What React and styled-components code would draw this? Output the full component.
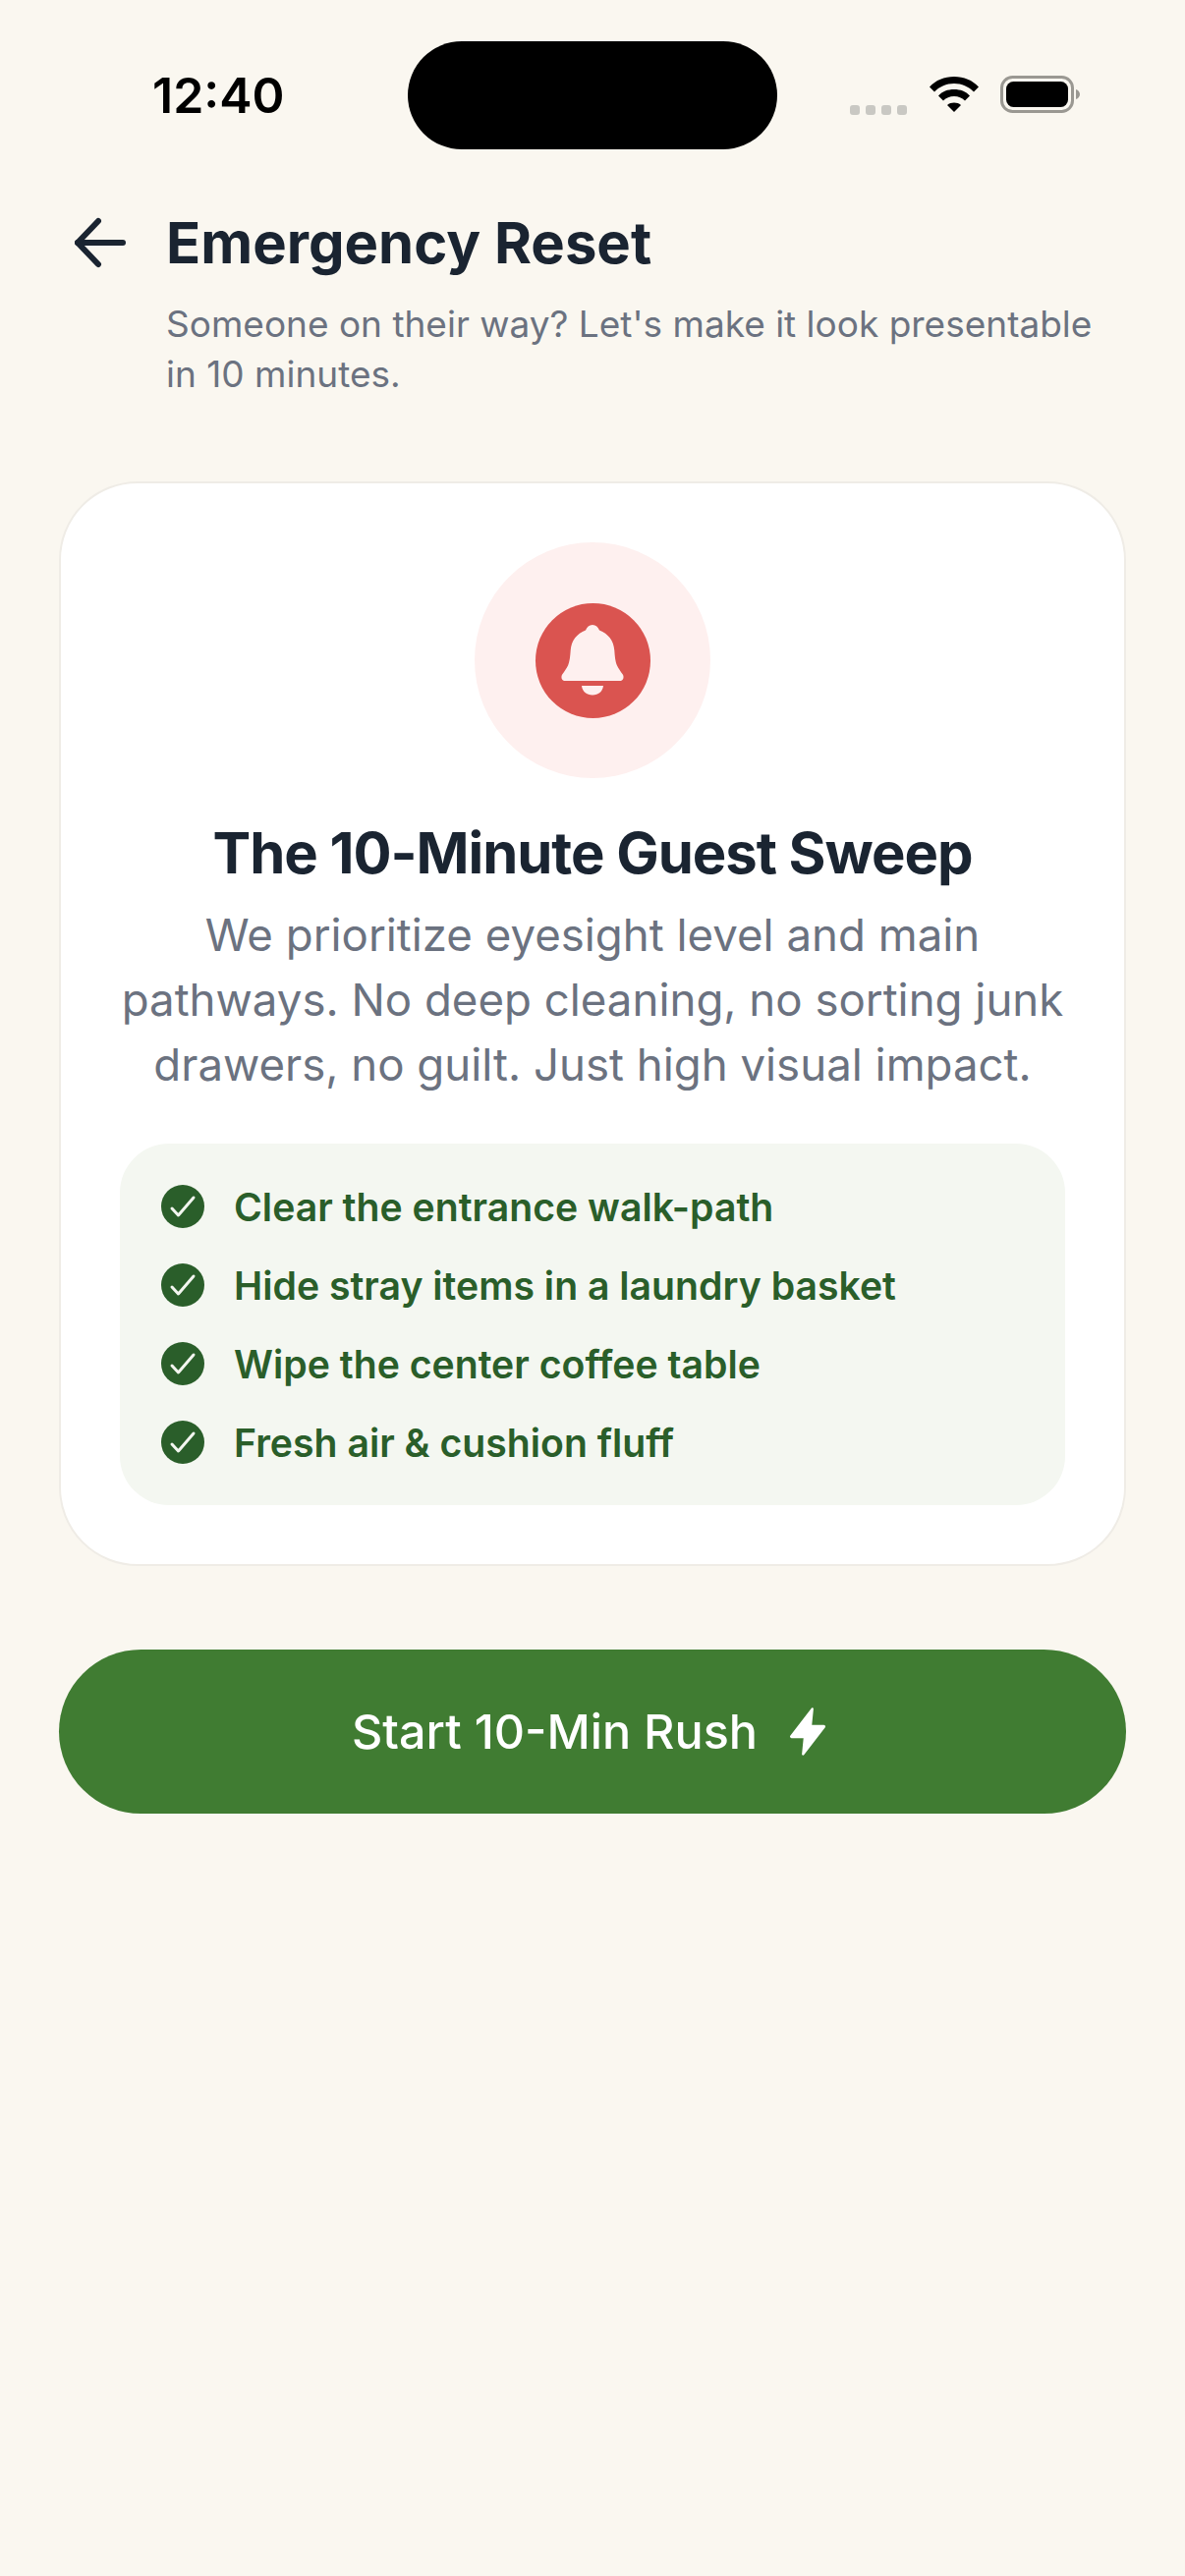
import React from "react";
import styled, { createGlobalStyle } from "styled-components";

const GlobalStyle = createGlobalStyle`
	html, body {
		margin: 0;
		padding: 0;
		background: #faf7f0;
	}
	body {
		font-family: "Inter", "Liberation Sans", sans-serif;
	}
`;

const items = [
	"Clear the entrance walk-path",
	"Hide stray items in a laundry basket",
	"Wipe the center coffee table",
	"Fresh air & cushion fluff",
];

const Screen = styled.div`
	width: 1206px;
	min-height: 2622px;
	background: #faf7f0;
	display: flex;
	flex-direction: column;
`;

const StatusBar = styled.div`
	height: 152px;
	padding-top: 42px;
	box-sizing: border-box;
	display: grid;
	grid-template-columns: 415px 376px 1fr;
`;

const Time = styled.div`
	font-size: 50px;
	font-weight: 600;
	color: #000;
	padding-left: 155px;
	line-height: 110px;
`;

const Island = styled.div`
	height: 110px;
	background: #000;
	border-radius: 55px;
`;

const StatusIcons = styled.div`
	display: flex;
	align-items: center;
	height: 110px;
	padding-left: 74px;
`;

const Dots = styled.div`
	display: flex;
	gap: 6px;
	margin-top: 30px;
	margin-right: 23px;
`;

const Dot = styled.span`
	width: 10px;
	height: 10px;
	border-radius: 3px;
	background: #c9c8c3;
`;

const Wifi = styled.svg`
	width: 50px;
	height: 37px;
	margin-right: 22px;
	margin-top: -3px;
`;

const Battery = styled.svg`
	width: 82px;
	height: 38px;
	margin-top: -3px;
`;

const Header = styled.header`
	display: grid;
	grid-template-columns: 93px 1fr;
	padding: 57px 60px 0 76px;
`;

const BackIcon = styled.svg`
	width: 52px;
	height: 52px;
	margin-top: 12px;
`;

const Title = styled.h1`
	margin: 0;
	font-size: 58px;
	line-height: 76px;
	font-weight: 700;
	color: #1a2431;
`;

const Subtitle = styled.p`
	grid-column: 2;
	margin: 19px 0 0;
	font-size: 37px;
	line-height: 51px;
	font-weight: 400;
	color: #6b7280;
`;

const Card = styled.section`
	margin: 84px 60px 0;
	padding: 60px;
	box-sizing: border-box;
	height: 1104px;
	background: #fff;
	border: 2px solid #efece6;
	border-radius: 80px;
	display: flex;
	flex-direction: column;
	align-items: center;
`;

const Halo = styled.div`
	width: 240px;
	height: 240px;
	flex: none;
	border-radius: 50%;
	background: #fef0ef;
	display: flex;
	align-items: center;
	justify-content: center;
`;

const BellBadge = styled.div`
	width: 117px;
	height: 117px;
	border-radius: 50%;
	background: #da5450;
	display: flex;
	align-items: center;
	justify-content: center;
`;

const BellIcon = styled.svg`
	width: 66px;
	height: 74px;
`;

const CardTitle = styled.h2`
	margin: 40px 0 0;
	font-size: 58px;
	line-height: 72px;
	font-weight: 700;
	letter-spacing: -1.05px;
	color: #1a2431;
`;

const Description = styled.p`
	margin: 15px 0 0;
	font-size: 45.6px;
	line-height: 66px;
	font-weight: 400;
	text-align: center;
	white-space: nowrap;
	color: #6b7280;
`;

const Checklist = styled.ul`
	list-style: none;
	margin: 47px 0 0;
	padding: 42px;
	box-sizing: border-box;
	align-self: stretch;
	background: #f4f7f1;
	border-radius: 50px;
	display: flex;
	flex-direction: column;
	gap: 36px;
`;

const CheckItem = styled.li`
	display: flex;
	align-items: center;
	gap: 30px;
	height: 44px;
	font-size: 39.2px;
	font-weight: 600;
	color: #2a5e2a;
`;

const CheckIcon = styled.svg`
	width: 44px;
	height: 44px;
	flex: none;
`;

const RushButton = styled.button`
	margin: 85px 60px 0;
	height: 167px;
	border: none;
	border-radius: 84px;
	background: #407c32;
	color: #fff;
	font-family: inherit;
	font-size: 48.5px;
	font-weight: 500;
	display: flex;
	align-items: center;
	justify-content: center;
	gap: 32px;
`;

const BoltIcon = styled.svg`
	width: 38px;
	height: 51px;
	margin-right: 7px;
`;

export default function App() {
	return (
		<Screen>
			<GlobalStyle />
			<StatusBar>
				<Time>12:40</Time>
				<Island />
				<StatusIcons>
					<Dots>
						<Dot />
						<Dot />
						<Dot />
						<Dot />
					</Dots>
					<Wifi viewBox="0 0 50 37">
						<path d="M0 11.5C6.5 4.5 15 1 25 1s18.500 3.500 25 10.500l-5 5C39.500 11 33 8 25 8S10.500 11 5 16.500z" fill="#000" />
						<path d="M9 20.500C13 16 18.500 14 25 14s12 2 16 6.500l-5 5C33 22.500 29.500 21 25 21s-8 1.500-11 4.500z" fill="#000" />
						<path d="M18 30c2-1.800 4.300-2.500 7-2.500s5 .7 7 2.500l-7 7z" fill="#000" />
					</Wifi>
					<Battery viewBox="0 0 82 38">
						<rect x="1.500" y="1.500" width="72" height="35" rx="11" fill="none" stroke="#9a9892" strokeWidth="3" />
						<rect x="6" y="6" width="63" height="26" rx="7.500" fill="#000" />
						<path d="M77 14c2.500.8 4 2.800 4 5s-1.500 4.200-4 5z" fill="#9a9892" />
					</Battery>
				</StatusIcons>
			</StatusBar>

			<Header>
				<BackIcon viewBox="0 0 52 52" fill="none" stroke="#1a2431" strokeWidth="6" strokeLinecap="round" strokeLinejoin="round">
					<path d="M49 26H3" />
					<path d="M24 4L3 26l21 22" />
				</BackIcon>
				<Title>Emergency Reset</Title>
				<Subtitle>
					Someone on their way? Let's make it look presentable
					<br />
					in 10 minutes.
				</Subtitle>
			</Header>

			<Card>
				<Halo>
					<BellBadge>
						<BellIcon viewBox="0 0 66 74" fill="#fef0ef">
							<path d="M33 1C36.400 1 38.600 3.200 40 6.500C49 10 54.600 17 55.300 27C55.800 34 56.300 38 57.800 42C59.300 45.500 61.600 48.300 63.800 51.500C65.400 54 64.300 58 61.500 58H4.500C1.700 58 .6 54 2.200 51.500C4.400 48.300 6.700 45.500 8.200 42C9.700 38 10.200 34 10.700 27C11.400 17 17 10 26 6.500C27.400 3.200 29.600 1 33 1z" />
							<path d="M22 63H44C43.200 69 39 72.500 33 72.500S22.800 69 22 63z" />
						</BellIcon>
					</BellBadge>
				</Halo>
				<CardTitle>The 10-Minute Guest Sweep</CardTitle>
				<Description>
					We prioritize eyesight level and main
					<br />
					pathways. No deep cleaning, no sorting junk
					<br />
					drawers, no guilt. Just high visual impact.
				</Description>
				<Checklist>
					{items.map((item) => (
						<CheckItem key={item}>
							<CheckIcon viewBox="0 0 44 44">
								<circle cx="22" cy="22" r="22" fill="#2a5e2a" />
								<path d="M11 24l6.500 7L33 13" fill="none" stroke="#f3f6f0" strokeWidth="3" strokeLinecap="round" strokeLinejoin="round" />
							</CheckIcon>
							{item}
						</CheckItem>
					))}
				</Checklist>
			</Card>

			<RushButton>
				Start 10-Min Rush
				<BoltIcon viewBox="0 0 40 52" fill="#fff">
					<path d="M24 1c.9-.9 2.300-.4 2.200.9L24.500 19h12.700c1.500 0 2.300 1.500 1.500 2.600L16 51c-.9.900-2.300.4-2.200-.9L15.500 33H2.800c-1.500 0-2.300-1.500-1.500-2.600z" />
				</BoltIcon>
			</RushButton>
		</Screen>
	);
}
